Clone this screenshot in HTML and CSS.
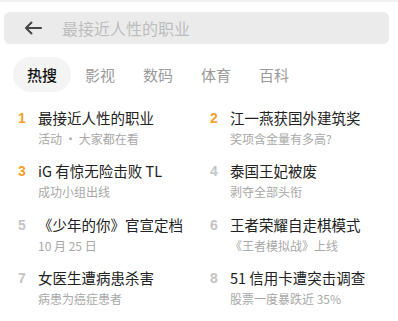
FILE: index.html
```html
<!DOCTYPE html>
<html>
<head>
  <meta charset="UTF-8">
  <title>热搜</title>
  <link rel="stylesheet" href="styles.css">
</head>
<body>
  <div class="page">
    <div class="search-bar">
      <svg class="back" width="18" height="14" viewBox="0 0 18 14">
        <path d="M17 7H2M7.5 1.5L2 7l5.5 5.5" fill="none" stroke="#444" stroke-width="2" stroke-linecap="round" stroke-linejoin="round"/>
      </svg>
      <span class="placeholder">最接近人性的职业</span>
    </div>

    <div class="tabs">
      <span class="tab active">热搜</span>
      <span class="tab">影视</span>
      <span class="tab">数码</span>
      <span class="tab">体育</span>
      <span class="tab">百科</span>
    </div>

    <div class="hot-list">
      <div class="item">
        <span class="rank top">1</span>
        <div class="info">
          <div class="title">最接近人性的职业</div>
          <div class="sub">活动&thinsp;·&thinsp;大家都在看</div>
        </div>
      </div>
      <div class="item">
        <span class="rank top">2</span>
        <div class="info">
          <div class="title">江一燕获国外建筑奖</div>
          <div class="sub">奖项含金量有多高?</div>
        </div>
      </div>
      <div class="item">
        <span class="rank top">3</span>
        <div class="info">
          <div class="title">iG 有惊无险击败 TL</div>
          <div class="sub">成功小组出线</div>
        </div>
      </div>
      <div class="item">
        <span class="rank">4</span>
        <div class="info">
          <div class="title">泰国王妃被废</div>
          <div class="sub">剥夺全部头衔</div>
        </div>
      </div>
      <div class="item">
        <span class="rank">5</span>
        <div class="info">
          <div class="title">《少年的你》官宣定档</div>
          <div class="sub">10 月 25 日</div>
        </div>
      </div>
      <div class="item">
        <span class="rank">6</span>
        <div class="info">
          <div class="title">王者荣耀自走棋模式</div>
          <div class="sub">《王者模拟战》上线</div>
        </div>
      </div>
      <div class="item">
        <span class="rank">7</span>
        <div class="info">
          <div class="title">女医生遭病患杀害</div>
          <div class="sub">病患为癌症患者</div>
        </div>
      </div>
      <div class="item">
        <span class="rank">8</span>
        <div class="info">
          <div class="title">51 信用卡遭突击调查</div>
          <div class="sub">股票一度暴跌近 35%</div>
        </div>
      </div>
    </div>
  </div>
</body>
</html>
```

FILE: styles.css
```css
html, body {
  margin: 0;
  padding: 0;
  background-color: #FFFFFF;
}

body {
  font-family: "Noto Sans CJK SC", "Noto Sans", sans-serif;
  color: #222222;
}

.page {
  width: 398px;
  border-top: 2px solid #F0F0F0;
  padding-top: 10px;
}

.search-bar {
  display: flex;
  align-items: center;
  margin: 0 9px 0 4px;
  height: 32px;
  border-radius: 6px;
  background-color: #EBEBEB;
}

.back {
  margin-left: 20px;
  flex: 0 0 auto;
}

.placeholder {
  margin-left: 20px;
  font-size: 16px;
  line-height: 32px;
  color: #BDBDBD;
}

.tabs {
  display: flex;
  margin-top: 13px;
  padding-left: 13px;
}

.tab {
  padding: 0 14px;
  height: 35px;
  line-height: 35px;
  font-size: 15px;
  color: #9A9A9A;
  border-radius: 18px;
}

.tab.active {
  color: #111111;
  font-weight: 500;
  background-color: #F4F4F4;
}

.hot-list {
  display: grid;
  grid-template-columns: 192px 1fr;
  row-gap: 13.5px;
  padding: 15.5px 0 0 18px;
}

.item {
  display: flex;
}

.rank {
  width: 20px;
  flex: 0 0 auto;
  font-family: "Liberation Sans", Arial, sans-serif;
  font-size: 14px;
  font-weight: bold;
  line-height: 20px;
  color: #C4C4C4;
}

.rank.top {
  color: #F5A12A;
}

.title {
  font-size: 14.5px;
  line-height: 20px;
  color: #222222;
  white-space: nowrap;
}

.sub {
  margin-top: 2px;
  font-size: 12px;
  line-height: 18px;
  color: #A8A8A8;
  white-space: nowrap;
}
```
